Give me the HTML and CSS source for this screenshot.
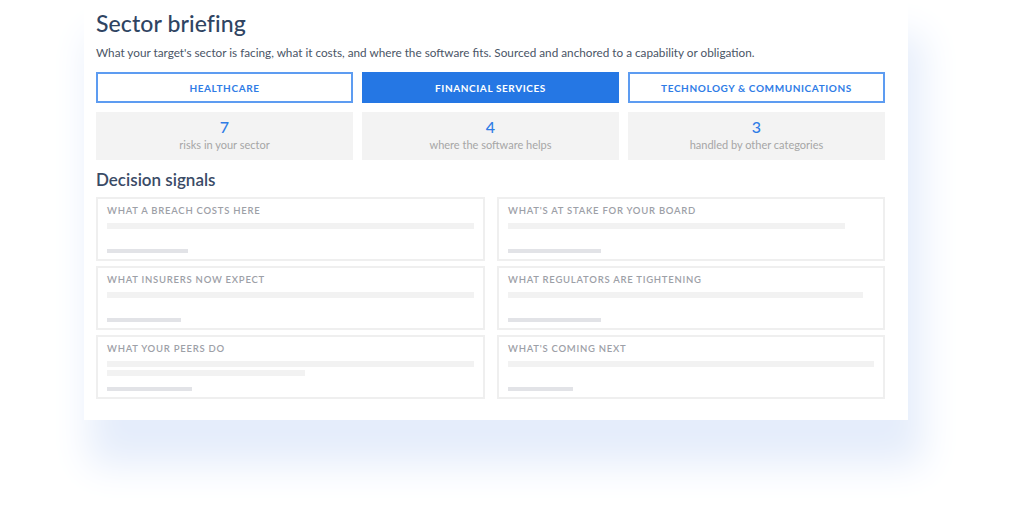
FILE: index.html
```html
<!DOCTYPE html>
<html lang="en">
<head>
  <meta charset="UTF-8">
  <meta name="viewport" content="width=device-width, initial-scale=1.0">
  <link rel="stylesheet" href="styles.css">
</head>
<body>
  <div class="sheet">
    <h1>Sector briefing</h1>
    <p class="lede">What your target's sector is facing, what it costs, and where the software fits. Sourced and anchored to a capability or obligation.</p>

    <!-- Sector tabs -->
    <div class="tabs">
      <button class="tab">Healthcare</button>
      <button class="tab active">Financial services</button>
      <button class="tab">Technology &amp; communications</button>
    </div>

    <div class="stats">
      <div class="stat"><span class="num">7</span><span class="label">risks in your sector</span></div>
      <div class="stat"><span class="num">4</span><span class="label">where the software helps</span></div>
      <div class="stat"><span class="num">3</span><span class="label">handled by other categories</span></div>
    </div>

    <h2>Decision signals</h2>
    <!-- Signal cards, still loading -->
    <div class="signals">
      <div class="signal">
        <div class="signal-title">What a breach costs here</div>
        <div class="line"></div>
        <div class="foot" style="width: 81px"></div>
      </div>
      <div class="signal">
        <div class="signal-title">What's at stake for your board</div>
        <div class="line" style="width: 92%"></div>
        <div class="foot" style="width: 93px"></div>
      </div>
      <div class="signal">
        <div class="signal-title">What insurers now expect</div>
        <div class="line"></div>
        <div class="foot" style="width: 74px"></div>
      </div>
      <div class="signal">
        <div class="signal-title">What regulators are tightening</div>
        <div class="line" style="width: 97%"></div>
        <div class="foot" style="width: 93px"></div>
      </div>
      <div class="signal">
        <div class="signal-title">What your peers do</div>
        <div class="line"></div>
        <div class="line" style="width: 54%"></div>
        <div class="foot" style="width: 85px"></div>
      </div>
      <div class="signal">
        <div class="signal-title">What's coming next</div>
        <div class="line"></div>
        <div class="foot" style="width: 65px"></div>
      </div>
    </div>
  </div>
</body>
</html>
```

FILE: styles.css
```css
/* Basic layout */
body, html {
  margin: 0;
  padding: 0;
  background: #fff;
  font-family: Lato, "Open Sans", sans-serif;
}
body {
  min-height: 516px;
  padding-bottom: 96px;
  box-sizing: border-box;
}
.sheet {
  width: 789px;
  margin-left: 84px;
  padding: 9px 23px 21px 12px;
  background: #fff;
  box-shadow: 10px 40px 36px 5px #e5edfb;
}
h1 {
  margin: 0;
  font-size: 23px;
  font-weight: 500;
  line-height: 28px;
  letter-spacing: 0.1px;
  color: #2f4462;
}
.lede {
  margin: 8px 0 0;
  font-size: 11.75px;
  line-height: 16px;
  color: #4a5566;
}
/* Tabs */
.tabs {
  display: grid;
  grid-template-columns: repeat(3, 1fr);
  gap: 9px;
  margin-top: 11px;
}
.tab {
  height: 31px;
  padding: 0;
  border: 2px solid #5d9cf1;
  background: #fff;
  color: #2f7ce6;
  font-family: inherit;
  font-size: 10px;
  font-weight: 700;
  letter-spacing: 0.6px;
  text-transform: uppercase;
  cursor: pointer;
}
.tab.active {
  background: #2577e4;
  border-color: #2577e4;
  color: #fff;
}
/* Counters */
.stats {
  display: grid;
  grid-template-columns: repeat(3, 1fr);
  gap: 9px;
  margin-top: 9px;
}
.stat {
  height: 48px;
  box-sizing: border-box;
  padding-top: 6px;
  background: #f3f3f3;
  display: flex;
  flex-direction: column;
  align-items: center;
}
.stat .num {
  font-size: 16px;
  font-weight: 500;
  line-height: 18px;
  color: #2f7ce6;
}
.stat .label {
  margin-top: 2px;
  font-size: 11px;
  line-height: 13px;
  color: #a6a6a6;
}
h2 {
  margin: 9px 0 0;
  font-size: 17px;
  font-weight: 600;
  line-height: 22px;
  color: #3a4b66;
}
/* Signal cards */
.signals {
  display: grid;
  grid-template-columns: 389px 1fr;
  column-gap: 12px;
  row-gap: 5px;
  margin-top: 6px;
}
.signal {
  height: 64px;
  box-sizing: border-box;
  border: 2px solid #efefef;
  padding: 5px 9px 6px;
  display: flex;
  flex-direction: column;
}
.signal-title {
  font-size: 9.5px;
  font-weight: 600;
  line-height: 13px;
  letter-spacing: 0.75px;
  text-transform: uppercase;
  color: #9da0a7;
}
.line {
  height: 6px;
  margin-top: 3px;
  background: #f2f2f2;
}
.signal-title + .line {
  margin-top: 6px;
}
.foot {
  height: 4px;
  margin-top: auto;
  background: #e2e3e7;
}
```
